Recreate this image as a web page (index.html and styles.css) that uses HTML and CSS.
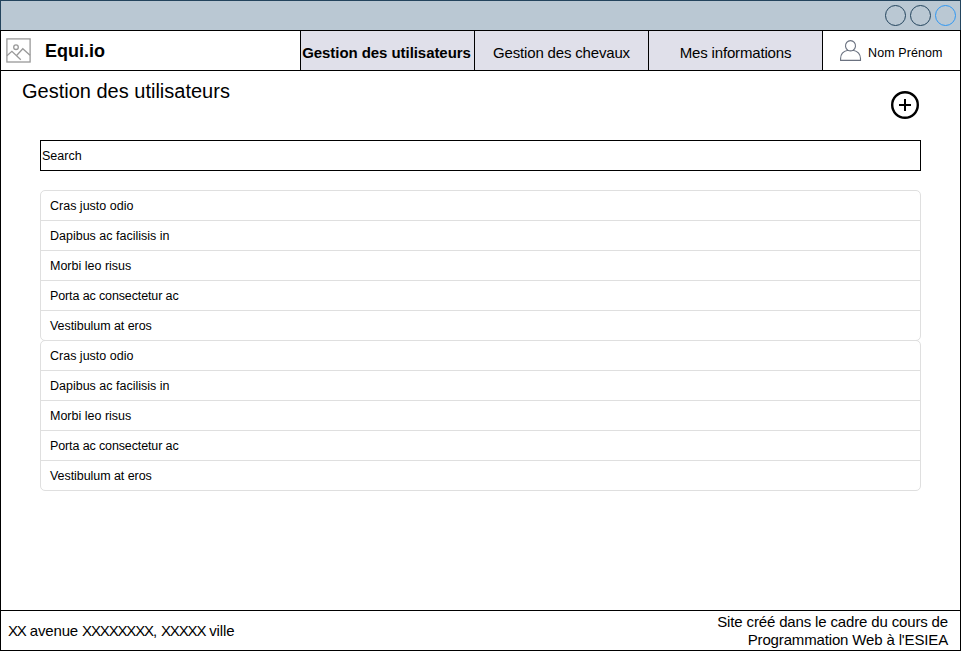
FILE: index.html
```html
<!DOCTYPE html>
<html lang="fr">
<head>
<meta charset="utf-8">
<title>Equi.io</title>
<link rel="stylesheet" href="styles.css">
</head>
<body>
<div class="window">
  <div class="titlebar">
    <svg width="71" height="22" viewBox="0 0 71 22" fill="none">
      <circle cx="10.5" cy="10.5" r="10" stroke="#23445d"/>
      <circle cx="35.5" cy="10.5" r="10" stroke="#23445d"/>
      <circle cx="60.5" cy="10.5" r="10" stroke="#2e97f3"/>
    </svg>
  </div>
  <header class="header">
    <div class="brand">
      <svg class="logo" width="25" height="25" viewBox="0 0 25 25" fill="none" stroke="#999" stroke-width="1.3">
        <rect x=".9" y=".9" width="23.2" height="23.1"/>
        <circle cx="10" cy="9.2" r="2.3"/>
        <path d="M.9 17.7 5.9 13.3 14.8 21.8M10.6 17.5 16.8 10.7 24 17.2"/>
      </svg>
      <h1>Equi.io</h1>
    </div>
    <nav class="tabs">
      <a class="tab active">Gestion des utilisateurs</a>
      <a class="tab">Gestion des chevaux</a>
      <a class="tab">Mes informations</a>
    </nav>
    <div class="user">
      <svg width="22" height="22" viewBox="0 0 22 22" fill="none" stroke="#6b7280" stroke-width="1.1">
        <path d="M7.8 10.2A5 5.2 0 1 1 13.2 10.2C17.5 11.2 20.4 14 20.5 18.5V20.4H.6V18.5C.6 14 3.5 11.2 7.8 10.2ZM7.8 10.2Q10.5 11.6 13.2 10.2"/>
      </svg>
      <span>Nom Prénom</span>
    </div>
  </header>
  <main class="main">
    <div class="heading">
      <h2>Gestion des utilisateurs</h2>
      <svg class="add" width="28" height="28" viewBox="0 0 28 28" fill="none" stroke="#000">
        <circle cx="14" cy="14" r="12.8" stroke-width="2.4"/>
        <path d="M8 14H20M14 8V20" stroke-width="2"/>
      </svg>
    </div>
    <div class="search">Search</div>
    <ul class="list">
      <li>Cras justo odio</li>
      <li>Dapibus ac facilisis in</li>
      <li>Morbi leo risus</li>
      <li>Porta ac consectetur ac</li>
      <li>Vestibulum at eros</li>
    </ul>
    <ul class="list">
      <li>Cras justo odio</li>
      <li>Dapibus ac facilisis in</li>
      <li>Morbi leo risus</li>
      <li>Porta ac consectetur ac</li>
      <li>Vestibulum at eros</li>
    </ul>
  </main>
  <footer class="footer">
    <p><span class="tight">XX</span> avenue <span class="tight">XXXXXXXX</span>, <span class="tight">XXXXX</span> ville</p>
    <p class="credit">Site créé dans le cadre du cours de<br>Programmation Web à l'ESIEA</p>
  </footer>
</div>
</body>
</html>
```
FILE: styles.css
```css
* { box-sizing: border-box; margin: 0; padding: 0; }
body {
  font-family: "Liberation Sans", Arial, sans-serif;
  color: #000;
  background: #fff;
}
svg { display: block; flex: none; }
.window {
  display: flex;
  flex-direction: column;
  width: 961px;
  height: 651px;
}
.titlebar {
  display: flex;
  justify-content: flex-end;
  height: 30px;
  padding: 4px 4px 0 0;
  background: #bac8d3;
  border: 1px solid #23445d;
  border-bottom: 0;
}
.header {
  display: flex;
  height: 41px;
  border: 1px solid #000;
}
.brand {
  display: flex;
  width: 299px;
  padding-left: 5px;
}
.logo { margin-top: 7px; }
.brand h1 {
  margin: 9px 0 0 14px;
  font-size: 18px;
  line-height: 22px;
}
.tabs { display: flex; }
.tab {
  width: 174px;
  padding-top: 12px;
  border-left: 1px solid #000;
  background: #e0e0ea;
  font-size: 15px;
  line-height: 20px;
  letter-spacing: -0.17px;
  text-align: center;
  white-space: nowrap;
}
.active {
  padding-right: 2px;
  font-weight: bold;
  letter-spacing: -0.06px;
}
.user {
  display: flex;
  flex: 1;
  padding-left: 17px;
  border-left: 1px solid #000;
  font-size: 12.5px;
  line-height: 16px;
  letter-spacing: 0.1px;
}
.user svg { margin-top: 9px; }
.user span { margin: 14px 0 0 6px; }
.main {
  flex: 1;
  padding: 0 39px;
  border: solid #000;
  border-width: 0 1px;
}
.heading {
  display: flex;
  justify-content: space-between;
  height: 69px;
}
.heading h2 {
  margin: 8px 0 0 -18px;
  font-size: 20px;
  font-weight: normal;
  line-height: 24px;
}
.add { margin: 20px 2px 0 0; }
.search {
  height: 31px;
  margin-bottom: 19px;
  padding: 1px 0 0 1px;
  border: 1px solid #000;
  font-size: 12.5px;
  line-height: 28px;
}
.list {
  height: 151px;
  margin-bottom: -1px;
  border: 1px solid #dfdfdf;
  border-radius: 5px;
  list-style: none;
  font-size: 12.5px;
}
.list li {
  height: 30px;
  padding: 1px 0 0 9px;
  line-height: 28px;
}
.list li:nth-child(4) { letter-spacing: -0.12px; }
.list li:nth-child(5) { letter-spacing: -0.06px; }
.list li:not(:last-child) { border-bottom: 1px solid #dfdfdf; }
.footer {
  display: flex;
  justify-content: space-between;
  align-items: center;
  height: 41px;
  padding: 0 12px 0 7px;
  border: 1px solid #000;
  font-size: 15px;
  line-height: 18px;
  letter-spacing: -0.15px;
}
.tight { letter-spacing: -1.15px; }
.credit { text-align: right; }
```
